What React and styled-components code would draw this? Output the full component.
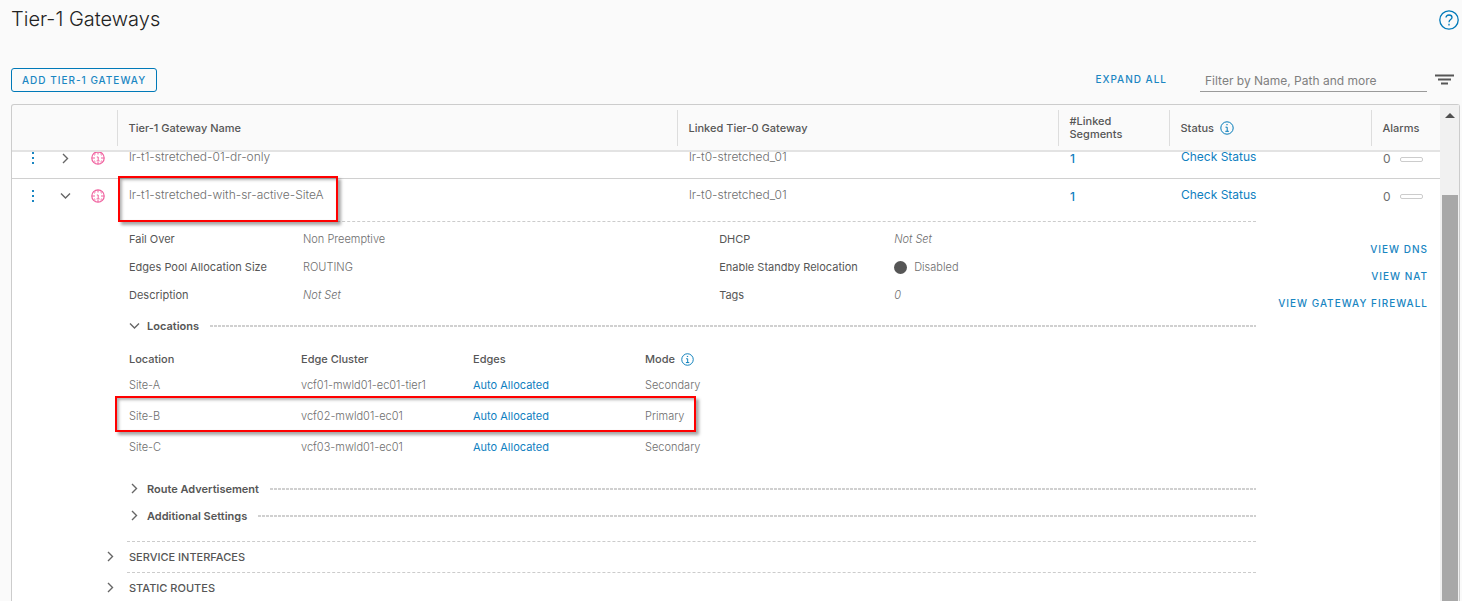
import styled, { createGlobalStyle } from 'styled-components'

const GlobalStyle = createGlobalStyle`
  * { box-sizing: border-box; }
  body {
    margin: 0;
    background: #fafafa;
    color: #565656;
    font-family: Inter, "Open Sans", sans-serif;
    font-size: 11px;
    line-height: 16px;
  }
  svg { flex-shrink: 0; }
`

const Page = styled.div`
  height: 100vh;
  padding-left: 11px;
  display: flex;
  flex-direction: column;
  overflow: hidden;
`
const TitleBar = styled.header`
  height: 40px;
  padding-right: 3px;
  display: flex;
  align-items: center;
  justify-content: space-between;
`
const Title = styled.h1`
  margin: 0;
  padding-bottom: 2px;
  font-size: 20px;
  font-weight: 300;
  line-height: 24px;
  color: #222;
`
const IconButton = styled.button`
  display: flex;
  padding: 0;
  border: 0;
  background: none;
  color: ${props => props.$color || '#565656'};
`
const Toolbar = styled.div`
  height: 64px;
  padding: 0 8px 12px 0;
  display: flex;
  align-items: flex-end;
`
const OutlineButton = styled.button`
  height: 24px;
  padding: 0 10px;
  border: 1px solid #0079b8;
  border-radius: 3px;
  background: transparent;
  color: #1a86c2;
  font: 500 10px/22px Inter, sans-serif;
  letter-spacing: 1px;
`
const TextButton = styled.button`
  padding: 0;
  border: 0;
  background: none;
  color: #1a86c2;
  font: 500 10px/27px Inter, sans-serif;
  letter-spacing: 1px;
`
const Tools = styled.div`
  height: 25px;
  margin-left: auto;
  display: flex;
  align-items: center;
`
const FilterInput = styled.input`
  width: 227px;
  height: 25px;
  margin: 0 8px 0 33px;
  padding: 2px 5px 0;
  border: 0;
  border-bottom: 1px solid #9a9a9a;
  background: transparent;
  font: 12px/16px Inter, sans-serif;
  &::placeholder { color: #808080; opacity: 1; }
`
const Card = styled.section`
  flex: 1;
  min-height: 0;
  margin-right: 2px;
  display: flex;
  border: 1px solid #ccc;
  border-bottom: 0;
  border-radius: 3px 3px 0 0;
`
const Grid = styled.div`
  flex: 1;
  min-width: 0;
  display: flex;
  flex-direction: column;
`
const GatewayTable = styled.table`
  width: 100%;
  table-layout: fixed;
  border-collapse: collapse;
`
const Col = styled.col`
  width: ${props => props.$width};
`
const HeadArea = styled.div`
  padding: 5px 0 4px;
  border-bottom: 2px solid #e3e3e3;
`
const HeadCell = styled.th`
  height: 36px;
  padding: 0 11px;
  border-left: ${props => (props.$first ? '0' : '1px solid #ddd')};
  text-align: left;
  font-weight: 500;
  line-height: 13px;
`
const HeadLabel = styled.span`
  display: flex;
  align-items: center;
  gap: 6px;
`
const BodyArea = styled.div`
  flex: 1;
  min-height: 0;
  overflow: hidden;
  background: #fff;
`
const BodyTable = styled(GatewayTable)`
  margin-top: -11px;
`
const Cell = styled.td`
  position: relative;
  height: ${props => (props.$open ? '43px' : '37px')};
  padding: ${props => (props.$low ? '10px' : '8px')} 12px 0;
  border-bottom: ${props => (props.$open ? '0' : '1px solid #d0d0d0')};
  vertical-align: top;
  color: #6e6e6e;
  font-size: 12px;
  font-weight: ${props => (props.$low ? 400 : 300)};
`
const RowTools = styled.div`
  display: flex;
  align-items: center;
  gap: 26px;
  padding-left: 8px;
`
const RowIcons = styled.div`
  display: flex;
  align-items: center;
  gap: 20px;
`
const Link = styled.a`
  color: #0f80bf;
  font-weight: ${props => (props.$strong ? 500 : 400)};
  text-decoration: none;
`
const Alarm = styled.span`
  display: flex;
  align-items: center;
  gap: 9px;
`
const AlarmBar = styled.span`
  width: 23px;
  height: 5px;
  border: 1px solid #ccc;
  border-radius: 2px;
`
const Highlight = styled.span`
  position: absolute;
  border: 2px solid #ff0000;
  box-shadow: 3px 3px 3px rgba(0, 0, 0, 0.35), inset 2px 2px 3px rgba(0, 0, 0, 0.3);
  pointer-events: none;
`
const NameHighlight = styled(Highlight)`
  top: -3px;
  left: 1px;
  width: 220px;
  height: 46px;
`
const RowHighlight = styled(Highlight)`
  inset: -4px 14px -1px -14px;
`
const DetailCell = styled.td`
  padding: 0;
`
const Details = styled.div`
  display: flex;
  padding: 0 12px 0 93px;
`
const DetailMain = styled.div`
  flex: 1;
  min-width: 0;
  margin-right: 22px;
`
const DetailBody = styled.div`
  margin-left: 22px;
  border-top: 1px dashed #ccc;
  padding: 3px 0 12px 2px;
`
const Fields = styled.dl`
  margin: 0;
  display: grid;
  grid-template-columns: 174px 1fr 175px 362px;
  line-height: 28px;
`
const Term = styled.dt`
  font-weight: 400;
`
const Value = styled.dd`
  margin: 0;
  display: flex;
  align-items: center;
  gap: 7px;
  color: #6e6e6e;
  font-weight: 300;
  font-style: ${props => (props.$unset ? 'italic' : 'normal')};
`
const Dot = styled.span`
  width: 13px;
  height: 13px;
  border-radius: 50%;
  background: #565656;
`
const GroupToggle = styled.button`
  width: 100%;
  height: ${props => (props.$open ? '33px' : '27px')};
  padding: 0;
  display: flex;
  align-items: center;
  gap: 7px;
  border: 0;
  background: none;
  color: #565656;
  font: 600 11px/16px Inter, sans-serif;
  &::after {
    content: '';
    flex: 1;
    height: 2px;
    margin-left: 4px;
    background: repeating-linear-gradient(to right, #d0d0d0 0 3px, transparent 3px 4px);
  }
`
const LocationTable = styled.table`
  width: 581px;
  margin: 7px 0 13px;
  table-layout: fixed;
  border-collapse: collapse;
  th, td {
    padding: 0;
    text-align: left;
    white-space: nowrap;
  }
  th { height: 20px; font-weight: 500; }
  td { height: 31px; color: #6e6e6e; font-weight: 300; }
`
const LocationRow = styled.tr`
  position: relative;
`
const SectionToggle = styled.button`
  width: 100%;
  padding: 0;
  display: flex;
  align-items: center;
  gap: 11px;
  border: 0;
  background: none;
  color: #565656;
  font: 500 11px/30px Inter, sans-serif;
  text-align: left;
`
const SectionLabel = styled.span`
  flex: 1;
  padding-left: 2px;
  border-top: 1px dashed #ccc;
`
const SideLinks = styled.nav`
  padding-top: 15px;
  display: flex;
  flex-direction: column;
  align-items: flex-end;
`
const Scrollbar = styled.div`
  width: 19px;
  display: flex;
  flex-direction: column;
  align-items: center;
  background: #f1f1f1;
`
const Arrow = styled.div`
  margin: 8px 0 77px;
  border: 5px solid transparent;
  border-top: 0;
  border-bottom: 5px solid #505050;
`
const Thumb = styled.div`
  flex: 1;
  width: 16px;
  background: #a8a8a8;
`

const Chevron = ({ open }) => (
  <svg width="11" height="11" viewBox="0 0 11 11" fill="none" stroke="#666" strokeWidth="1.4">
    <path d={open ? 'M1 3.5l4.5 4.5L10 3.5' : 'M3 1l4.5 4.5L3 10'} />
  </svg>
)

const InfoIcon = ({ size = 14 }) => (
  <svg width={size} height={size} viewBox="0 0 14 14" fill="none" stroke="#0079b8">
    <circle cx="7" cy="7" r="6.2" />
    <path d="M5.5 6.2h1.7v4M5.3 10.3h3.6M6.3 3.7h1.4" />
  </svg>
)

const HelpIcon = () => (
  <svg width="20" height="20" viewBox="0 0 20 20" fill="none" stroke="currentColor" strokeWidth="1.3">
    <circle cx="10" cy="10" r="9.2" />
    <path d="M7 7.6C7 5.9 8.2 5 10 5s3 1 3 2.5C13 9.5 10 9.7 10 12.2M10 13.8v1.6" />
  </svg>
)

const FilterIcon = () => (
  <svg width="19" height="12" viewBox="0 0 19 12" stroke="currentColor" strokeWidth="1.8">
    <path d="M0 1.5h19M3 5.5h13M6 9.5h7" />
  </svg>
)

const DotsIcon = () => (
  <svg width="2" height="14" viewBox="0 0 2 14" fill="#1a86c2">
    <path d="M0 1h2v2H0zM0 6h2v2H0zM0 11h2v2H0z" />
  </svg>
)

/* ring cut by four ticks, with an "i" in the middle */
const GlobalIcon = () => (
  <svg width="14" height="14" viewBox="0 0 14 14" fill="none" stroke="#f0609e">
    <circle cx="7" cy="7" r="6.2" strokeWidth="1.2" />
    <path d="M7 1v2.500M7 11v2M1 7h3M10 7h3M5.800 6H7.200V9.700M5.600 9.900h3" />
    <path d="M4.200 2.500L3.500 4.500M9.800 2.500l.7 2M3.500 9.500l.7 2M10.500 9.500l-.7 2" strokeWidth="0.8" />
  </svg>
)

const Columns = () => (
  <colgroup>
    <Col $width="105px" />
    <Col />
    <Col $width="381px" />
    <Col $width="111px" />
    <Col $width="202px" />
    <Col $width="69px" />
  </colgroup>
)

const gateways = [
  { name: 'lr-t1-stretched-01-dr-only', tier0: 'lr-t0-stretched_01', segments: 1, alarms: 0 },
  { name: 'lr-t1-stretched-with-sr-active-SiteA', tier0: 'lr-t0-stretched_01', segments: 1, alarms: 0, open: true },
]

const locations = [
  { site: 'Site-A', cluster: 'vcf01-mwld01-ec01-tier1', mode: 'Secondary' },
  { site: 'Site-B', cluster: 'vcf02-mwld01-ec01', mode: 'Primary', marked: true },
  { site: 'Site-C', cluster: 'vcf03-mwld01-ec01', mode: 'Secondary' },
]

function GatewayRow({ gateway }) {
  const { name, tier0, segments, alarms, open } = gateway
  return (
    <tr>
      <Cell $open={open} $low>
        <RowTools>
          <IconButton aria-label="Actions"><DotsIcon /></IconButton>
          <RowIcons>
            <IconButton aria-label="Toggle details"><Chevron open={open} /></IconButton>
            <GlobalIcon />
          </RowIcons>
        </RowTools>
      </Cell>
      <Cell $open={open}>{name}{open && <NameHighlight />}</Cell>
      <Cell $open={open}>{tier0}</Cell>
      <Cell $open={open} $low><Link href="#segments" $strong>{segments}</Link></Cell>
      <Cell $open={open}><Link href="#status">Check Status</Link></Cell>
      <Cell $open={open} $low><Alarm>{alarms}<AlarmBar /></Alarm></Cell>
    </tr>
  )
}

function Locations() {
  return (
    <LocationTable>
      <colgroup>
        <Col $width="172px" />
        <Col $width="172px" />
        <Col $width="172px" />
        <Col />
      </colgroup>
      <thead>
        <tr>
          <th>Location</th>
          <th>Edge Cluster</th>
          <th>Edges</th>
          <th><HeadLabel>Mode <InfoIcon size={13} /></HeadLabel></th>
        </tr>
      </thead>
      <tbody>
        {locations.map(row => (
          <LocationRow key={row.site}>
            <td>{row.site}{row.marked && <RowHighlight />}</td>
            <td>{row.cluster}</td>
            <td><Link href="#edges">Auto Allocated</Link></td>
            <td>{row.mode}</td>
          </LocationRow>
        ))}
      </tbody>
    </LocationTable>
  )
}

function GatewayDetails() {
  return (
    <Details>
      <DetailMain>
        <DetailBody>
          <Fields>
            <Term>Fail Over</Term><Value>Non Preemptive</Value>
            <Term>DHCP</Term><Value $unset>Not Set</Value>
            <Term>Edges Pool Allocation Size</Term><Value>ROUTING</Value>
            <Term>Enable Standby Relocation</Term><Value><Dot />Disabled</Value>
            <Term>Description</Term><Value $unset>Not Set</Value>
            <Term>Tags</Term><Value $unset>0</Value>
          </Fields>
          <GroupToggle $open><Chevron open />Locations</GroupToggle>
          <Locations />
          <GroupToggle><Chevron />Route Advertisement</GroupToggle>
          <GroupToggle><Chevron />Additional Settings</GroupToggle>
        </DetailBody>
        <SectionToggle><Chevron /><SectionLabel>SERVICE INTERFACES</SectionLabel></SectionToggle>
        <SectionToggle><Chevron /><SectionLabel>STATIC ROUTES</SectionLabel></SectionToggle>
      </DetailMain>
      <SideLinks>
        <TextButton>VIEW DNS</TextButton>
        <TextButton>VIEW NAT</TextButton>
        <TextButton>VIEW GATEWAY FIREWALL</TextButton>
      </SideLinks>
    </Details>
  )
}

function App() {
  return <>
    <GlobalStyle />
    <Page>
      <TitleBar>
        <Title>Tier-1 Gateways</Title>
        <IconButton aria-label="Help" $color="#0079b8"><HelpIcon /></IconButton>
      </TitleBar>
      <Toolbar>
        <OutlineButton>ADD TIER-1 GATEWAY</OutlineButton>
        <Tools>
          <TextButton>EXPAND ALL</TextButton>
          <FilterInput aria-label="Filter" placeholder="Filter by Name, Path and more" />
          <IconButton aria-label="Filter options"><FilterIcon /></IconButton>
        </Tools>
      </Toolbar>
      <Card>
        <Grid>
          <HeadArea>
            <GatewayTable>
              <Columns />
              <thead>
                <tr>
                  <HeadCell $first />
                  <HeadCell>Tier-1 Gateway Name</HeadCell>
                  <HeadCell>Linked Tier-0 Gateway</HeadCell>
                  <HeadCell>#Linked Segments</HeadCell>
                  <HeadCell><HeadLabel>Status <InfoIcon /></HeadLabel></HeadCell>
                  <HeadCell>Alarms</HeadCell>
                </tr>
              </thead>
            </GatewayTable>
          </HeadArea>
          <BodyArea>
            <BodyTable>
              <Columns />
              <tbody>
                {gateways.map(gateway => <GatewayRow key={gateway.name} gateway={gateway} />)}
                <tr>
                  <DetailCell colSpan={6}><GatewayDetails /></DetailCell>
                </tr>
              </tbody>
            </BodyTable>
          </BodyArea>
        </Grid>
        <Scrollbar>
          <Arrow />
          <Thumb />
        </Scrollbar>
      </Card>
    </Page>
  </>
}

export default App
